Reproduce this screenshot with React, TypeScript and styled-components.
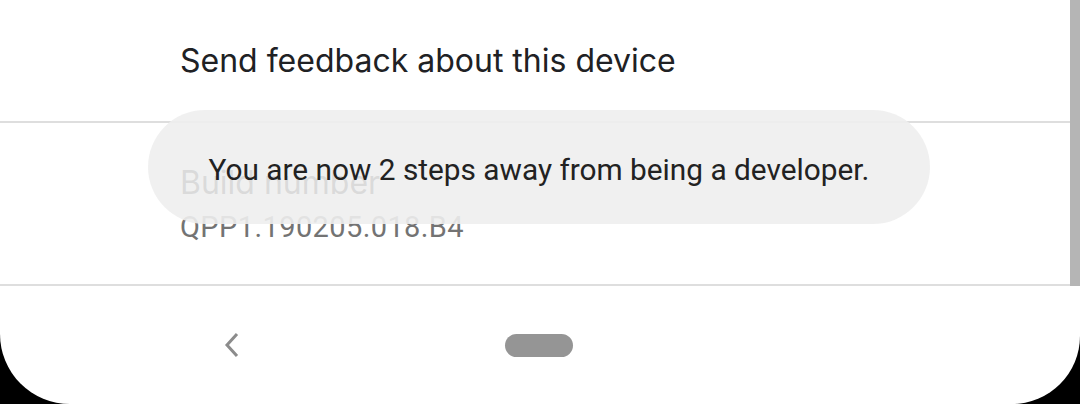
import { createGlobalStyle, styled } from "styled-components";
import type { FC } from "react";

const GlobalStyle = createGlobalStyle`
    html, body {
        margin: 0;
        padding: 0;
        background: #000;
    }

    body {
        font-family: Roboto, "Liberation Sans", sans-serif;
    }

    * {
        box-sizing: border-box;
    }
`;

const Screen = styled.div`
    position: relative;
    width: 1080px;
    height: 404px;
    background: #fff;
    border-radius: 0 0 68px 70px;
    overflow: hidden;
    display: flex;
    flex-direction: column;
`;

const List = styled.div`
    position: relative;
    display: flex;
    flex-direction: column;
`;

const Row = styled.div<{ $height: number }>`
    height: ${(p) => p.$height}px;
    padding-left: 180px;
    display: flex;
    flex-direction: column;
    justify-content: center;
    border-bottom: 2px solid #dedede;
`;

const Title = styled.div`
    font-family: Inter, Roboto, sans-serif;
    font-size: 32px;
    color: #202124;
`;

const Summary = styled.div`
    margin-top: 8px;
    font-size: 29px;
    color: #737373;
    letter-spacing: 0.4px;
`;

const ScrollThumb = styled.div`
    position: absolute;
    top: 0;
    right: 0;
    width: 10px;
    height: 286px;
    background: #b5b5b5;
`;

const Toast = styled.div`
    position: absolute;
    left: 148px;
    top: 110px;
    width: 782px;
    height: 114px;
    padding-top: 4px;
    border-radius: 57px;
    background: rgba(238, 238, 238, 0.9);
    display: flex;
    align-items: center;
    justify-content: center;
    font-size: 29.8px;
    color: #222;
`;

const NavBar = styled.div`
    flex: 1;
    display: flex;
    align-items: center;
    padding-left: 222px;
`;

const BackButton = styled.div`
    width: 18px;
    height: 26px;
    display: flex;
    svg {
        stroke: #8c8c8c;
    }
`;

const HomePill = styled.div`
    margin-left: 265px;
    width: 68px;
    height: 23px;
    border-radius: 12px;
    background: #959595;
`;

const App: FC = () => {
    return (
        <>
            <GlobalStyle />
            <Screen>
                <List>
                    <Row $height={123}>
                        <Title>Send feedback about this device</Title>
                    </Row>
                    <Row $height={163}>
                        <Title>Build number</Title>
                        <Summary>QPP1.190205.018.B4</Summary>
                    </Row>
                    <ScrollThumb />
                </List>
                <NavBar>
                    <BackButton>
                        <svg width="18" height="26" viewBox="0 0 18 26" fill="none">
                            <path d="M15 2 L5 13 L15 24" strokeWidth="3" />
                        </svg>
                    </BackButton>
                    <HomePill />
                </NavBar>
                <Toast>You are now 2 steps away from being a developer.</Toast>
            </Screen>
        </>
    );
};

export default App;
